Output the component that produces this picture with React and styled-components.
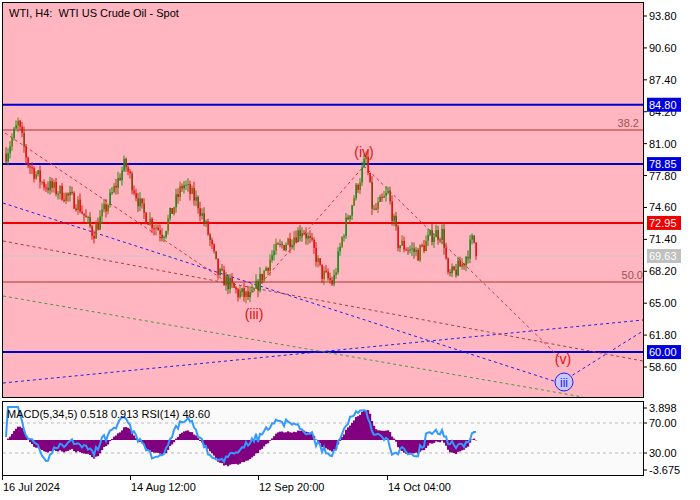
import React from "react";
import styled, { createGlobalStyle } from "styled-components";

const Global = createGlobalStyle`
  html, body { margin: 0; padding: 0; background: #ffffff; }
  body { font-family: "Liberation Sans", "DejaVu Sans", sans-serif; }
`;

const Page = styled.div`
  width: 700px; height: 500px; display: flex; flex-direction: column;
  padding-top: 2px; box-sizing: border-box; background: #fff;
`;
const Row = styled.div`
  display: flex; height: ${p => p.$h}px; margin-bottom: ${p => p.$mb || 0}px;
`;
const Plot = styled.div`
  position: relative; margin-left: 2px; width: 642px; height: 100%;
  box-sizing: border-box; border: 1px solid #000; background: ${p => p.$bg};
  overflow: hidden;
`;
const Axis = styled.div`
  width: 56px; height: 100%;
`;
const Title = styled.div`
  position: absolute; left: 6px; top: 4px; font-size: 11px; color: #000;
`;
const TimeAxis = styled.div`
  position: relative; margin-left: 2px; height: 22px; width: 642px;
`;
const TimeLabel = styled.span`
  position: absolute; top: 5px; font-size: 11px; color: #000;
  &::before { content: ""; position: absolute; left: -1px; top: -5px; width: 1px; height: 4px; background: #000; }
`;

let seed = 7;
const rnd = () => { seed = (seed * 16807) % 2147483647; return seed / 2147483647; };
const Y = p => 13 + (93.8 - p) * 9.972;
const wp = [[3,80],[15,83],[25,79],[40,77],[60,76],[75,75],[90,72],[105,75],[122,79],[140,74],[160,72],[180,77],[195,75],[205,72],[215,68],[235,66],[248,65.5],[270,70],[300,72.5],[312,70],[318,68],[330,67],[340,72],[352,76],[363,79.5],[370,74],[385,76],[395,71],[415,70],[430,72],[440,72],[445,67.5],[460,69],[470,71.5],[474,70]];
const interp = x => { for (let i = 1; i < wp.length; i++) if (x <= wp[i][0]) { const [x0,y0]=wp[i-1],[x1,y1]=wp[i]; return y0+(y1-y0)*(x-x0)/(x1-x0);} return 70; };
const bars = []; let prev = 80;
for (let x = 3; x <= 474; x += 2) {
  const c = interp(x) + (rnd() - 0.5) * 1.6;
  const o = prev; const h = Math.max(o, c) + rnd() * 0.7; const l = Math.min(o, c) - rnd() * 0.7;
  bars.push({ x, o, c, h, l }); prev = c;
}
const closes = bars.map(b => b.c);
const ema = (arr, n) => { const k = 2 / (n + 1); let e = arr[0]; return arr.map(v => (e = v * k + e * (1 - k))); };
const e5 = ema(closes, 5), e34 = ema(closes, 34);
const macd = closes.map((_, i) => e5[i] - e34[i]);
const rsi = closes.map((_, i) => { let g = 0, l = 0; for (let j = Math.max(1, i - 13); j <= i; j++) { const d = closes[j] - closes[j-1]; if (d > 0) g += d; else l -= d; } return l + g === 0 ? 50 : 100 * g / (g + l); });

const priceLabels = [93.8,90.6,87.4,84.2,81.0,77.8,74.6,71.4,68.2,65.0,61.8,58.6];
const badges = [[84.8,"#0000dd","#fff"],[78.85,"#0000dd","#fff"],[72.95,"#ee0000","#fff"],[69.63,"#c0c0c0","#fff"],[60.0,"#0000dd","#fff"]];

function MainChart() {
  return (
    <svg width="640" height="394" style={{ display: "block" }}>
      <line x1="0" x2="640" y1={Y(84.8)-1} y2={Y(84.8)-1} stroke="#0000cc" strokeWidth="2" />
      <line x1="0" x2="640" y1={Y(78.85)-1} y2={Y(78.85)-1} stroke="#0000cc" strokeWidth="2" />
      <line x1="0" x2="640" y1={Y(72.95)-1} y2={Y(72.95)-1} stroke="#ee0000" strokeWidth="2" />
      <line x1="0" x2="640" y1={Y(60)-1} y2={Y(60)-1} stroke="#0000cc" strokeWidth="2" />
      <line x1="0" x2="640" y1="127" y2="127" stroke="#b03030" strokeWidth="1" />
      <line x1="0" x2="640" y1="279" y2="279" stroke="#b03030" strokeWidth="1" />
      <line x1="0" x2="640" y1={Y(69.63)-1} y2={Y(69.63)-1} stroke="#c8c8c8" strokeWidth="1" />
      <text x="636" y="124" fontSize="11" fill="#a05050" textAnchor="end">38.2</text>
      <text x="640" y="276" fontSize="11" fill="#a05050" textAnchor="end">50.0</text>
      <g fill="none" strokeWidth="1" strokeDasharray="3 3">
        <polyline points="2,130 246,294 361,163 557,355" stroke="#e03030" />
        <polyline points="0,200 557,380 640,328" stroke="#2020ee" />
        <line x1="0" y1="380" x2="640" y2="317" stroke="#2020ee" />
        <line x1="0" y1="238" x2="640" y2="358" stroke="#a04040" />
        <line x1="0" y1="293" x2="580" y2="394" stroke="#449944" />
      </g>
      {bars.map((b, i) => {
        const up = b.c >= b.o; const col = up ? (i % 3 ? "#1e8c1e" : "#6b7a10") : (i % 3 ? "#ee1010" : "#8b4513");
        return (
          <g key={i}>
            <line x1={b.x} x2={b.x} y1={Y(b.h)} y2={Y(b.l)} stroke={col} strokeWidth="1" />
            <rect x={b.x - 0.5} y={Y(Math.max(b.o, b.c))} width="1.5" height={Math.max(1, Math.abs(b.o - b.c) * 9.97)} fill={col} />
          </g>
        );
      })}
      <text x="251" y="316" fontSize="14" fill="#dd1111" textAnchor="middle">(iii)</text>
      <text x="361" y="154" fontSize="14" fill="#dd1111" textAnchor="middle">(iv)</text>
      <text x="560" y="361" fontSize="14" fill="#dd1111" textAnchor="middle">(v)</text>
      <circle cx="561" cy="379" r="9" fill="#c8c8ff" stroke="#2020ee" />
      <text x="561" y="384" fontSize="12" fill="#2020ee" textAnchor="middle">iii</text>
    </svg>
  );
}

function PriceAxis() {
  return (
    <svg width="56" height="396" style={{ display: "block" }}>
      {priceLabels.map(p => (
        <g key={p}>
          <line x1="0" x2="3" y1={Y(p)+1} y2={Y(p)+1} stroke="#000" />
          <text x="5" y={Y(p)+5} fontSize="11" fill="#000">{p.toFixed(2)}</text>
        </g>
      ))}
      {badges.map(([p, bg, fg]) => (
        <g key={p}>
          <rect x="3" y={Y(p) - 7} width="34" height="14" fill={bg} />
          <text x="5" y={Y(p) + 4} fontSize="11" fill={fg}>{p.toFixed(2)}</text>
        </g>
      ))}
    </svg>
  );
}

function Indicator() {
  const zero = 38;
  const clamp = v => Math.max(-30, Math.min(30, v));
  const rpts = rsi.map((r, i) => `${bars[i].x},${20 + (70 - (50 + (r - 50) * 0.8)) * 0.75}`).join(" ");
  return (
    <svg width="640" height="73" style={{ display: "block" }}>
      <line x1="0" x2="640" y1="21" y2="21" stroke="#bbb" strokeDasharray="3 3" />
      <line x1="0" x2="640" y1="51" y2="51" stroke="#bbb" strokeDasharray="3 3" />
      {macd.map((m, i) => {
        const h = clamp(m * 6);
        return <rect key={i} x={bars[i].x - 1} width="2.2" y={h > 0 ? zero - h : zero} height={Math.abs(h)} fill="#800080" />;
      })}
      <polyline points={rpts} fill="none" stroke="#3399ff" strokeWidth="2" />
      <text x="4" y="16" fontSize="11" fill="#000">MACD(5,34,5) 0.518 0.913 RSI(14) 48.60</text>
    </svg>
  );
}

function IndAxis() {
  const l = [[3.898, 7, "3.898"], [70, 22, "70.00"], [30, 52, "30.00"], [-3.675, 69, "-3.675"]];
  return (
    <svg width="56" height="75" style={{ display: "block" }}>
      {l.map(([k, y, t]) => (
        <g key={k}>
          <line x1="0" x2="3" y1={y} y2={y} stroke="#000" />
          <text x="5" y={y + 4} fontSize="11" fill="#000">{t}</text>
        </g>
      ))}
    </svg>
  );
}

export default function App() {
  return (
    <Page>
      <Global />
      <Row $h={396} $mb={3}>
        <Plot $bg="#ffb6c1">
          <MainChart />
          <Title>WTI, H4:&nbsp; WTI US Crude Oil - Spot</Title>
        </Plot>
        <Axis><PriceAxis /></Axis>
      </Row>
      <Row $h={75}>
        <Plot $bg="#fafafa"><Indicator /></Plot>
        <Axis><IndAxis /></Axis>
      </Row>
      <TimeAxis>
        {[["16 Jul 2024", 1], ["14 Aug 12:00", 129], ["12 Sep 20:00", 257], ["14 Oct 04:00", 386]].map(([t, x]) => (
          <TimeLabel key={t} style={{ left: x }}>{t}</TimeLabel>
        ))}
      </TimeAxis>
    </Page>
  );
}
